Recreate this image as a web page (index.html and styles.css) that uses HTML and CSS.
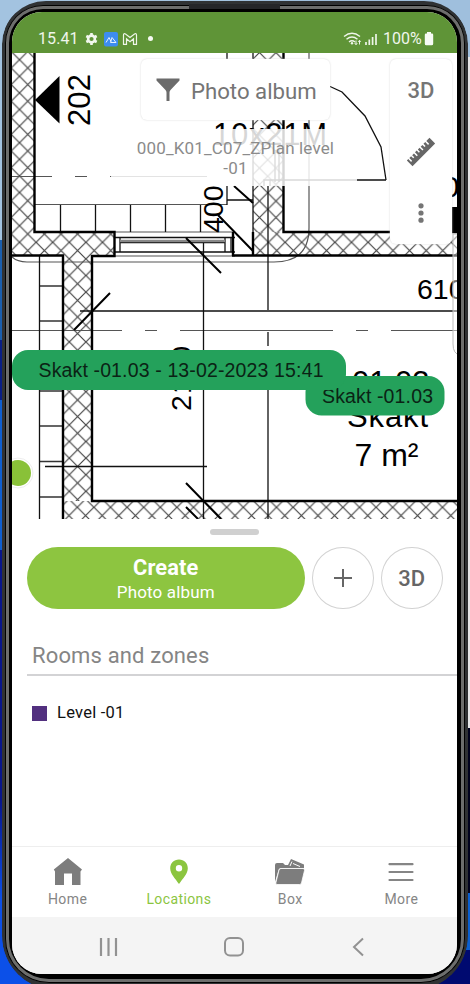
FILE: index.html
```html
<!DOCTYPE html>
<html lang="en">
<head>
<meta charset="utf-8">
<title>Locations</title>
<link rel="stylesheet" href="styles.css">
</head>
<body>
<div class="phone">
<div class="bezel">
<main class="screen">
  <header class="status">
    <span class="clock">15.41</span>
    <svg class="status-left" width="66" height="16" viewBox="85 30 66 16">
      <circle cx="91.500" cy="38" r="3.400" fill="none" stroke="#f2f7ee" stroke-width="2.600"/>
      <g stroke="#f2f7ee" stroke-width="2.600"><path d="M91.500 32v2M91.500 42v2M86.300 35l1.800 1M94.900 40l1.800 1M86.300 41l1.800-1M94.900 36l1.800-1"/></g>
      <rect x="104" y="31" width="14" height="14.500" rx="2" fill="#3d8df0"/>
      <path d="M106 41.500l3-5 2 4M110.500 41.500l1.500-5 4 5z" fill="none" stroke="#e5f1ff" stroke-width="1"/>
      <path d="M123.500 43.300v-9.300q0-2 2-1l4.500 3.500 4.500-3.500q2-1 2 1v9.300h-3v-5.500l-3.500 3-3.500-3v5.500z" fill="none" stroke="#eef5e9" stroke-width="1.200"/>
    </svg>
    <i class="dot"></i>
    <svg class="status-right" width="36" height="16" viewBox="343 30 36 16" fill="none" stroke="#eef5e9">
      <path d="M344 35.500q8-6.500 16 0M346.500 38.300q5.500-4.500 11 0M349 41q3-2.500 6 0" stroke-width="1.400"/>
      <circle cx="352" cy="42.300" r="1.200" fill="#eef5e9" stroke="none"/>
      <path d="M356 39.500v4M354.700 42.200l1.300 1.500 1.300-1.500M359.500 43.500v-4M358.200 40.800l1.300-1.500 1.300 1.500" stroke-width="1"/>
      <path d="M366 44v-3M369.300 44v-5.500M372.600 44v-8M376 44v-11" stroke-width="1.700"/>
    </svg>
    <span class="battery-text">100%</span>
    <svg width="10" height="14" viewBox="0 0 10 14"><path d="M3 0h4v1.500h1q1.200 0 1.200 1.200v9q0 1.600-1.600 1.600H2.400Q.8 13.300.8 11.700v-9Q.8 1.500 2 1.500h1z" fill="#f7fbf4"/></svg>
  </header>

  <section class="map">
    <svg class="plan" width="446" height="466" viewBox="12 53 446 466">
      <defs>
        <pattern id="hatch" x="52.700" y="242.300" width="16.600" height="16.600" patternUnits="userSpaceOnUse"><path d="M-1 -1L17.600 17.600M17.600 -1L-1 17.600" stroke="#444" stroke-width="1.200"/></pattern>
        <pattern id="hatchLow" x="243.300" y="507.300" width="16.600" height="16.600" patternUnits="userSpaceOnUse"><path d="M-1 -1L17.600 17.600M17.600 -1L-1 17.600" stroke="#444" stroke-width="1.200"/></pattern>
        <pattern id="hatchColumn" x="267.700" y="209.300" width="16.500" height="16.500" patternUnits="userSpaceOnUse"><path d="M-1 -1L17.500 17.500M17.500 -1L-1 17.500" stroke="#444" stroke-width="1.200"/></pattern>
      </defs>
      <rect x="12" y="53" width="446" height="466" fill="#fff"/>
      <path d="M12 53h22v179h80v23H92v246H63V255H12z" fill="url(#hatch)"/>
      <path d="M63 501h395v18H63z" fill="url(#hatchLow)"/>
      <path d="M253 53h30v179h-30z" fill="url(#hatchColumn)"/>
      <path d="M253 232h205v23H253z" fill="url(#hatch)"/>

      <g fill="none" stroke="#555" stroke-width="1.200">
        <path d="M35 204.500H227M114 232H235M115 256H235M12 257Q17 262 27 262H274Q309 262 309 228V53"/>
        <path d="M12 176.500H52M75 176.500h12M110 176.500H207M12 330.500H122M145 330.500h12M180 330.500H333M356 330.500h12M391 330.500h67"/>
        <path d="M39 286H62M39 321H62M39 391H62M39 426H62M39 461.500H62M39 497H62" stroke="#333" stroke-width="1.500"/>
      </g>
      <g fill="none" stroke="#111" stroke-width="1.300">
        <path d="M60.500 205v27M95.500 205v27M130.500 205v27M165.500 205v27M200.500 205v27M39.500 256V519M203.500 243V519"/>
        <path d="M115 237.500H235M115 252H235M120 238v14M225 238v14M231 238v14M120 242.500H225"/>
        <path d="M120 241H225" stroke="#888" stroke-width="2.500"/>
        <path d="M268 186V310M268 332v14M268 390V519M227 53v6M227 186v19M227 200h26M270 180H386"/>
        <path d="M80 311H458M45 466.500H207" stroke-width="1.400"/>
        <path d="M329 86L342 92 365 116 381 147 386 180"/>
        <path d="M253 53V255M264 186v-6h6v6M275 150v32M279 150v32"/>
      </g>
      <g fill="none" stroke="#000" stroke-width="2.400">
        <path d="M34.500 53V232H114.500V256H92V501H458M12 255.500H63V519M233 232V256M232 255.500H458M283.500 53V232H458M253 232v23"/>
        <path d="M186 238L221 273M74 330L110 293M186 483L221 519M186 507L198 519M218 215L253 251M234 186L253 203" stroke-width="2"/>
      </g>
      <path d="M35 100L59.500 76V123.500z"/>
      <g class="plan-text">
        <text transform="translate(90 126) rotate(-90)" font-size="31" textLength="52">202</text>
        <text x="213" y="145" font-size="31" textLength="114">10x21M</text>
        <text transform="translate(191 411) rotate(-90)" font-size="28.500" textLength="65">2110</text>
        <text x="417" y="299" font-size="28.500">610</text>
        <text x="352" y="393" font-size="31">01.03</text>
        <text x="347" y="427" font-size="31" textLength="81">Skakt</text>
        <text x="354.500" y="465.500" font-size="32">7 m²</text>
        <text x="442.500" y="197" font-size="30">0</text>
      </g>
      <rect x="452" y="207" width="6" height="25"/>
      <path class="fade" d="M111 129H357V186H111z"/>
      <text class="plan-text" transform="translate(223 233) rotate(-90)" font-size="28.500">400</text>
      <path d="M460 234H453V344Q453 354 460 355" fill="#fff" fill-opacity=".45" stroke="#bbb"/>
      <circle cx="18" cy="473" r="15" fill="#fff" stroke="#eee"/>
      <circle cx="18" cy="473" r="13" fill="#89c138"/>
      <g class="zone">
        <rect x="305.500" y="376" width="139" height="39.500" rx="16"/>
        <text x="322" y="402.500" font-size="19.500" textLength="111">Skakt -01.03</text>
        <rect x="12" y="350" width="334" height="40" rx="16"/>
        <text x="38.500" y="377" font-size="19.500" textLength="285">Skakt -01.03 - 13-02-2023 15:41</text>
      </g>
    </svg>

    <div class="filter card">
      <svg width="24" height="24" viewBox="0 0 24 24"><path d="M.5.500h23v2L14.500 12q-1 1-1 2.500V23h-3v-8.500q0-1.500-1-2.500L.5 2.500z" fill="#6b6b6b"/></svg>
      <span>Photo album</span>
    </div>
    <p class="plan-name">000_K01_C07_ZPlan level<br>-01</p>
    <div class="tools card">
      <b>3D</b>
      <svg width="30" height="30" viewBox="0 0 30 30"><g transform="rotate(-45 15 15)"><path d="M-1 11h2v4h1.500v-4H5v3h1.500v-3H9v4h1.500v-4H13v3h1.500v-3H17v4h1.500v-4H21v3h1.500v-3H25v4h1.500v-4H31v8H-1z" fill="#666"/></g></svg>
      <svg width="6" height="20" viewBox="0 0 6 20" fill="#757575"><circle cx="3" cy="2.800" r="2.600"/><circle cx="3" cy="10" r="2.600"/><circle cx="3" cy="17.200" r="2.600"/></svg>
    </div>
  </section>

  <section class="sheet">
    <i class="handle"></i>
    <div class="actions">
      <div class="create"><strong>Create</strong><span>Photo album</span></div>
      <div class="round"><svg width="18" height="18" viewBox="0 0 18 18"><path d="M9 0v18M0 9h18" stroke="#666" stroke-width="2"/></svg></div>
      <div class="round">3D</div>
    </div>
    <h2>Rooms and zones</h2>
    <div class="level"><i></i><span>Level -01</span></div>
  </section>

  <nav class="tabs">
    <div><svg width="30" height="28" viewBox="0 0 30 28"><path d="M15 0L29 11.500 27.500 13.500V27H19V15.500H11V27H2V13.500L.8 11.500z" fill="#7d7d7d"/></svg><span>Home</span></div>
    <div class="active"><svg width="30" height="28" viewBox="0 0 30 28"><path fill-rule="evenodd" d="M15 1.500C9.800 1.500 6.200 5.300 6.200 10.200 6.200 16 11 20 15 26c4-6 8.800-10 8.800-15.800C23.800 5.300 20.200 1.500 15 1.500zm0 5.500a3.200 3.200 0 1 1 0 6.400A3.200 3.200 0 0 1 15 7z" fill="#8bc53f"/></svg><span>Locations</span></div>
    <div><svg width="30" height="28" viewBox="0 0 30 28"><path d="M0 24V7q0-2 2-2h6l2 2h3L16 1l13 5.500V10H6q-1.800 0-2.300 1.500z" fill="#7d7d7d"/><path d="M15 8l2-4.500M18 5.500l7 3" stroke="#fff" stroke-width="1" fill="none"/><path d="M6 10.500H28q2 0 1.500 2L26.500 25q-.4 1.500-2 1.500H2q-1.600 0-1.200-1.500L4 12q.5-1.500 2-1.500z" fill="#7d7d7d" stroke="#fff" stroke-width=".8"/></svg><span>Box</span></div>
    <div><svg width="30" height="28" viewBox="0 0 30 28"><path d="M3.500 6.200h23M3.500 14h23M3.500 22h23" stroke="#858585" stroke-width="2.200" stroke-linecap="round"/></svg><span>More</span></div>
  </nav>

  <footer class="system">
    <svg width="20" height="20" viewBox="0 0 20 20"><path d="M2 1v18M9.500 1v18M17 1v18" stroke="#929292" stroke-width="2.200"/></svg>
    <svg width="20" height="20" viewBox="0 0 20 20"><rect x="1" y="1" width="18" height="17.500" rx="5" fill="none" stroke="#929292" stroke-width="2"/></svg>
    <svg width="20" height="20" viewBox="0 0 20 20"><path d="M14 1.500L5 10l9 8.500" fill="none" stroke="#929292" stroke-width="2"/></svg>
  </footer>
</main>
</div>
<i class="earpiece"></i>
</div>
</body>
</html>
```
FILE: styles.css
```css
* { box-sizing: border-box; }

body {
  margin: 0;
  width: 470px;
  height: 984px;
  overflow: hidden;
  font-family: Roboto, "Liberation Sans", sans-serif;
  background:
    linear-gradient(#9fbfdd 57px, #e6e6e8 57px 728px, #02031f 728px 893px, #0a5fd0 893px 950px, #000a70 950px) right / 50% 100% no-repeat,
    linear-gradient(#a3c3e0 240px, #1b5fae 240px 340px, #0a1f86 340px 400px, #0f5fd0 400px 550px, #08168c 550px 800px, #0c50e8 900px) left / 50% 100% no-repeat;
}

.phone {
  position: relative;
  width: 466px;
  height: 990px;
  margin-left: 2px;
  padding: 3px;
  padding-top: 4px;
  border-top: 1px solid transparent;
  background-clip: padding-box;
  background-color: #303234;
  border-radius: 44px 44px 54px 54px;
}

.bezel {
  height: 978px;
  padding: 7px 8px 6px 7px;
  border-radius: 38px 38px 44px 44px;
  background: #000;
  box-shadow: inset 0 0 0 1px #000, inset 0 0 0 4px #6d6e6d;
}

.screen {
  display: flex;
  flex-direction: column;
  width: 445px;
  height: 962px;
  overflow: hidden;
  border-radius: 30px;
  background: #fff;
}

.earpiece {
  position: absolute;
  left: 187px;
  top: 3px;
  width: 91px;
  height: 5px;
  background: #252629;
}

.status {
  display: flex;
  flex: none;
  align-items: center;
  height: 41px;
  padding: 12px 23px 0 26px;
  background: #5f9437;
  color: #f0f6ec;
  font-size: 16px;
}

.clock { width: 47px; letter-spacing: 0.1px; }
.status-left { width: 66px; }
.dot { width: 5px; height: 5px; margin-left: -3px; border-radius: 50%; background: #f5f9f2; }
.status-right { margin-left: auto; }
.battery-text { width: 40px; margin-left: 4px; margin-right: 1px; }

.map { position: relative; flex: none; height: 466px; }
.plan { display: block; }
.plan-text, .zone text { font-family: "Liberation Sans", Arial, sans-serif; }
.fade { fill: #fff; fill-opacity: 0.84; }
.zone rect { fill: #24a15b; }
.zone text { fill: #0b2315; }

.card {
  position: absolute;
  display: flex;
  align-items: center;
  border-radius: 6px;
  background: #fff;
  box-shadow: 0 0 2px #d4d4d4;
  color: #757575;
}

.filter {
  left: 129px;
  top: 6px;
  width: 189px;
  height: 61px;
  padding-left: 15px;
  gap: 11px;
  font-size: 22.2px;
}

.filter span { padding-top: 2px; }

.tools {
  left: 378px;
  top: 6px;
  width: 62px;
  height: 185px;
  flex-direction: column;
  padding-top: 19px;
  font-size: 22px;
  line-height: 26px;
}

.tools b { font-weight: 500; }
.tools svg:nth-of-type(1) { margin-top: 33px; }
.tools svg:nth-of-type(2) { margin-top: 36px; }

.plan-name {
  position: absolute;
  left: 99px;
  top: 85px;
  width: 249px;
  margin: 0;
  text-align: center;
  font-size: 17px;
  letter-spacing: 0.15px;
  line-height: 20px;
  color: #8b8b8b;
}

.sheet {
  display: flex;
  flex: 1;
  flex-direction: column;
  padding-left: 15px;
  background: #fff;
}

.handle {
  flex: none;
  width: 49px;
  height: 6px;
  margin: 10px 0 0 183px;
  border-radius: 3px;
  background: #d0d0d0;
}

.actions { display: flex; gap: 7.5px; margin-top: 12px; }

.create {
  display: flex;
  flex-direction: column;
  align-items: center;
  width: 277.5px;
  height: 62px;
  padding-top: 8px;
  border-radius: 31px;
  background: #8dc540;
  color: #fff;
  font-size: 17px;
  letter-spacing: 0.15px;
  line-height: 25px;
}

.create strong { font-size: 21.8px; line-height: 25px; }

.round {
  display: flex;
  align-items: center;
  justify-content: center;
  width: 61.5px;
  height: 62px;
  border: 1px solid #d2d2d2;
  border-radius: 50%;
  color: #666;
  font-size: 22px;
  font-weight: 500;
}

h2 {
  height: 67px;
  margin: 0;
  padding: 33px 0 0 5px;
  border-bottom: 2px solid #d3d3d5;
  color: #858585;
  font-size: 22px;
  font-weight: 400;
  letter-spacing: 0.15px;
  line-height: 28px;
}

.level { display: flex; align-items: center; gap: 10px; margin: 26px 0 0 5px; font-size: 16.5px; letter-spacing: 0.25px; line-height: 22px; color: #111; }
.level i { width: 15px; height: 15px; background: #52307f; }

.tabs {
  display: grid;
  flex: none;
  grid-template-columns: repeat(4, 1fr);
  height: 71px;
  border-top: 1px solid #eee;
  color: #858585;
  font-size: 14px;
}

.tabs div { display: flex; flex-direction: column; align-items: center; padding-top: 11px; }
.tabs span { margin-top: 4px; line-height: 18px; letter-spacing: 0.4px; }
.tabs .active { color: #8bc53f; }

.system {
  display: flex;
  flex: none;
  justify-content: space-between;
  height: 57px;
  padding: 20px 88px 0 87px;
  background: #f4f4f4;
}
```
